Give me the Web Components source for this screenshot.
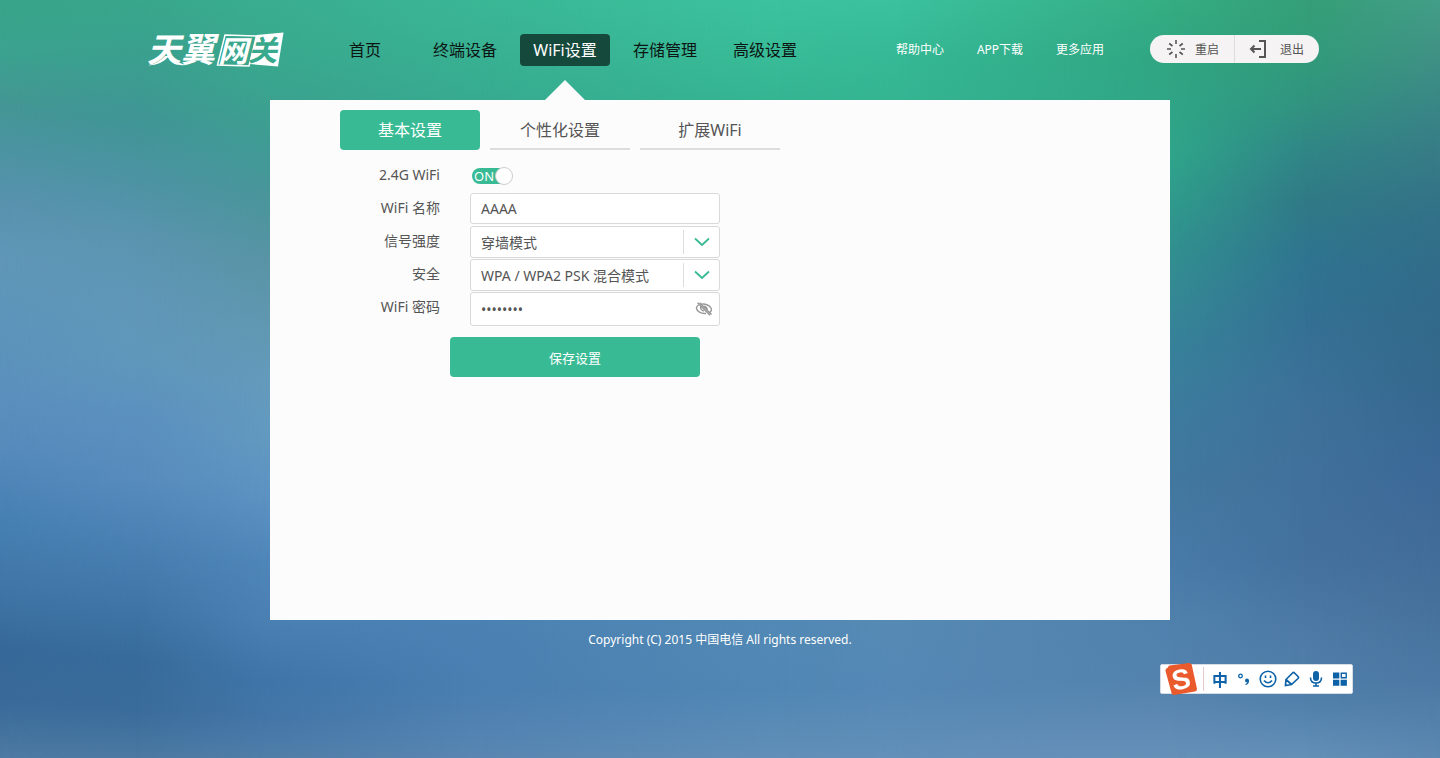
<!DOCTYPE html>
<html lang="zh-CN">
<head>
<meta charset="utf-8">
<meta name="viewport" content="width=device-width, initial-scale=1">
<title>天翼网关</title>
<style>
  body { margin: 0; font: 14px "Noto Sans", "Noto Sans CJK SC", sans-serif; color: #555; --accent: #38bb94; --surface: #fcfcfc; }
</style>
</head>
<body>
<gateway-page>
  <gateway-header slot="header"></gateway-header>
  <wifi-panel slot="main"></wifi-panel>
  <span slot="footer">Copyright (C) 2015 中国电信 All rights reserved.</span>
</gateway-page>
<ime-toolbar></ime-toolbar>

<script>
const define = (name, html, setup) => {
  const template = document.createElement('template');
  template.innerHTML = html;
  customElements.define(name, class extends HTMLElement {
    constructor() {
      super();
      this.attachShadow({ mode: 'open' }).append(template.content.cloneNode(true));
      if (setup) setup(this.shadowRoot, this);
    }
  });
};

/* Blurred backdrop: vertical gradients that fade into each other from left to right.
   Each entry is [x of 1440, [y of 758, colour], ...]. */
const columns = [
  [0, [0,'#38a488'],[50,'#3ba38f'],[100,'#439793'],[140,'#4a94a0'],[200,'#5892ae'],[260,'#6097b8'],[330,'#5c94bb'],[400,'#5b8fbd'],[450,'#568abc'],[520,'#4680b2'],[590,'#4076a7'],[650,'#366999'],[700,'#396a99'],[758,'#4d7aa3']],
  [135, [0,'#38a78b'],[60,'#3b9f8f'],[120,'#409595'],[180,'#4d93a4'],[240,'#5b94b0'],[300,'#6097b8'],[360,'#5f97bb'],[420,'#5b90bf'],[480,'#578bbd'],[540,'#4a81b3'],[600,'#4077a8'],[660,'#376b9b'],[710,'#3a6c9a'],[758,'#4b79a3']],
  [270, [0,'#3aad90'],[60,'#39a88e'],[100,'#3ba28f'],[150,'#409a95'],[200,'#4a959b'],[260,'#5894a5'],[320,'#6097b0'],[380,'#649abb'],[440,'#6299c0'],[500,'#5b92c2'],[560,'#4f86b8'],[620,'#4a80b3'],[680,'#3f75a8'],[720,'#4476a8'],[758,'#507ea9']],
  [480, [0,'#3ab795'],[100,'#37ab90'],[400,'#5f97ba'],[620,'#4b82b3'],[690,'#4a7fb1'],[758,'#5986b2']],
  [780, [0,'#3cc29e'],[60,'#38bb97'],[100,'#35b592'],[400,'#4c8cab'],[620,'#5289b5'],[690,'#5187b4'],[758,'#618fb8']],
  [900, [0,'#3bc19e'],[60,'#35b894'],[100,'#35b592'],[400,'#468cab'],[620,'#568ab4'],[690,'#5588b5'],[758,'#6290b9']],
  [1170, [0,'#35ad82'],[60,'#30a582'],[150,'#2fa58a'],[200,'#2f9b8c'],[250,'#31908f'],[300,'#358895'],[350,'#37819a'],[400,'#3c7c9d'],[480,'#42789f'],[560,'#487ba8'],[620,'#5081ad'],[680,'#5382ad'],[758,'#6690b8']],
  [1305, [0,'#359f77'],[60,'#319b7a'],[100,'#31947f'],[150,'#308686'],[200,'#307a86'],[260,'#2f7490'],[320,'#347093'],[400,'#3d7199'],[480,'#41709c'],[560,'#44719e'],[640,'#4e7ba7'],[700,'#5080ab'],[758,'#6390b7']],
  [1440, [0,'#429e87'],[50,'#409284'],[100,'#3a8786'],[150,'#377c86'],[220,'#327088'],[300,'#316a8a'],[380,'#34688c'],[450,'#3a6896'],[520,'#3f6a98'],[600,'#45709c'],[680,'#4b78a4'],[758,'#5b88b0']]
];

define('blurred-backdrop', `
<style>
  :host { display: block; position: absolute; inset: 0; z-index: -1; overflow: hidden; }
  div { position: absolute; inset: 0; }
</style>`, root => {
  columns.forEach(([x, ...stops], i) => {
    const layer = document.createElement('div');
    layer.style.background = `linear-gradient(${stops.map(([y, c]) => `${c} ${y / 758 * 100}%`).join(',')})`;
    if (i) {
      const mask = `linear-gradient(90deg, transparent ${columns[i - 1][0] / 1440 * 100}%, #000 ${x / 1440 * 100}%)`;
      layer.style.webkitMaskImage = layer.style.maskImage = mask;
    }
    root.append(layer);
  });
});

define('gateway-page', `
<style>
  :host { display: flex; flex-direction: column; position: relative; z-index: 0; min-height: 100vh; }
  main { width: 100%; max-width: 900px; margin: 0 auto; }
  footer { padding: 10px; text-align: center; font-size: 12px; line-height: 20px; color: #fff; }
</style>
<blurred-backdrop></blurred-backdrop>
<slot name="header"></slot>
<main><slot name="main"></slot></main>
<footer><slot name="footer"></slot></footer>`);

define('gateway-logo', `
<style>
  :host { display: block; }
  a, svg { display: block; }
  svg { overflow: visible; }
  text { font-family: "Noto Sans CJK SC", sans-serif; font-weight: 700; font-style: italic; }
</style>
<a href="#" aria-label="天翼网关">
<svg width="136" height="36" viewBox="0 0 136 36">
  <path d="M77 3 L108.500 4 L101 34 L69.500 33 Z" fill="none" stroke="#fff" stroke-width="1.500"/>
  <path d="M108.500 3 L135.500 .500 L130 34.500 L101.500 32 Z" fill="#fff"/>
  <path d="M0 33.500 Q11 31 17 24 L21 24 Q14 33 0 33.500 Z M19 24 L23 24 Q28 30 37 33 Q27 35 19 24 Z" fill="#fff"/>
  <text x="-1" y="30" font-size="34" fill="#fff">天翼</text>
  <text x="70" y="30" font-size="30" fill="#fff">网</text>
  <text x="100" y="29" font-size="29" fill="#39a98e">关</text>
</svg></a>`);

define('nav-item', `
<style>
  :host { display: block; flex: 0 0 100px; }
  a { display: block; position: relative; margin: 0 5px; font-size: 16px; line-height: 32px; text-align: center; white-space: nowrap; color: #0c1512; text-decoration: none; border-radius: 4px; }
  :host([current]) a { color: #fff; background: #15493c; }
  :host([current]) a::after { content: ""; position: absolute; top: 46px; left: calc(50% - 20px); border: 20px solid transparent; border-top: 0; border-bottom-color: var(--surface); }
</style>
<a href="#"><slot></slot></a>`);

define('gateway-header', `
<style>
  :host { display: block; }
  header { display: flex; align-items: center; box-sizing: border-box; height: 100px; max-width: 1200px; margin: 0 auto; padding: 0 1px 0 28px; }
  gateway-logo { flex: 0 0 136px; }
  nav { display: flex; }
  .main { margin-left: 31px; }
  .links { margin-left: auto; margin-right: 30px; }
  .links a { width: 80px; text-align: center; font-size: 12px; line-height: 20px; color: #fff; text-decoration: none; }
  .session { display: flex; height: 28px; margin-bottom: 2px; border-radius: 14px; overflow: hidden; background: #f5f3f3; }
  button { display: flex; align-items: center; justify-content: space-between; width: 84px; padding: 0 15px 0 17px; border: 0; background: none; font: inherit; font-size: 12px; color: #555; }
  button + button { width: 85px; padding-left: 14px; border-left: 1px solid #ddd; }
  svg { fill: none; stroke: #555; stroke-width: 2; }
</style>
<header>
  <gateway-logo></gateway-logo>
  <nav class="main">
    <nav-item>首页</nav-item>
    <nav-item>终端设备</nav-item>
    <nav-item current>WiFi设置</nav-item>
    <nav-item>存储管理</nav-item>
    <nav-item>高级设置</nav-item>
  </nav>
  <nav class="links"><a href="#">帮助中心</a><a href="#">APP下载</a><a href="#">更多应用</a></nav>
  <div class="session">
    <button type="button"><svg width="18" height="18" viewBox="0 0 18 18"><path d="M9 0V4M9 14V18M0 9H4M14 9H18M2.200 3.500L5.500 6M12.500 12L15.800 14.500M2.200 14.500L5.500 12M12.500 6L15.800 3.500" stroke-width="1.600"/></svg>重启</button>
    <button type="button"><svg width="18" height="18" viewBox="0 0 18 18"><path d="M10 1H16V17H10M12 9H2M5.500 5.500L2 9L5.500 12.500"/></svg>退出</button>
  </div>
</header>`);

define('panel-tab', `
<style>
  :host { display: block; flex: 0 0 140px; }
  a { display: block; box-sizing: border-box; height: 40px; border-bottom: 2px solid #ddd; font-size: 16px; line-height: 40px; text-align: center; color: #555; text-decoration: none; }
  :host([current]) a { border: 0; border-radius: 4px; background: var(--accent); color: #fff; }
</style>
<a href="#"><slot></slot></a>`);

const rowStyle = `
  :host { display: block; }
  .row { display: flex; gap: 30px; min-height: 33px; }
  .row > label { flex: 0 0 100px; text-align: right; line-height: 30px; }
  .box { position: relative; flex: 0 1 250px; }
  input, select { display: block; box-sizing: border-box; width: 100%; margin: 0; padding: 0 10px; border: 1px solid #d9d9d9; border-radius: 3px; background: #fff; color: #555; font: inherit; }
  svg { fill: none; }`;

define('switch-row', `
<style>${rowStyle}
  .switch { position: relative; width: 42px; height: 18px; margin: 7px 0 0 1px; }
  input { appearance: none; width: 36px; height: 16px; margin-top: 1px; margin-left: 1px; padding: 0; border: 0; border-radius: 8px; background: var(--accent); }
  .on { position: absolute; left: 3px; top: 0; font-size: 13px; line-height: 18px; color: #fff; pointer-events: none; }
  .knob { position: absolute; right: 0; top: 0; box-sizing: border-box; width: 18px; height: 18px; border: 1px solid #ccc; border-radius: 50%; background: #fff; pointer-events: none; }
</style>
<div class="row"><label for="c"></label><div class="switch"><input id="c" type="checkbox" role="switch" checked><span class="on">ON</span><span class="knob"></span></div></div>`,
(root, host) => { root.querySelector('label').textContent = host.getAttribute('label'); });

define('text-row', `
<style>${rowStyle} input { height: 31px; }</style>
<div class="row"><label for="c"></label><div class="box"><input id="c" type="text"></div></div>`,
(root, host) => {
  root.querySelector('label').textContent = host.getAttribute('label');
  root.querySelector('input').value = host.getAttribute('value');
});

define('select-row', `
<style>${rowStyle}
  select { appearance: none; height: 32px; padding-right: 40px; }
  .arrow { position: absolute; right: 0; top: 4px; display: grid; place-items: center; width: 36px; height: 24px; border-left: 1px solid #ddd; pointer-events: none; }
</style>
<div class="row"><label for="c"></label><div class="box"><select id="c"><option></option></select>
<span class="arrow"><svg width="16" height="10" viewBox="0 0 16 10"><path d="M1 1.500L8 8L15 1.500" stroke="#38bb94" stroke-width="1.800"/></svg></span></div></div>`,
(root, host) => {
  root.querySelector('label').textContent = host.getAttribute('label');
  root.querySelector('option').textContent = host.getAttribute('value');
});

define('password-row', `
<style>${rowStyle}
  input { height: 34px; padding-right: 32px; }
  button { position: absolute; right: 7px; top: 10px; display: block; padding: 0; border: 0; background: none; }
  svg { display: block; }
</style>
<div class="row"><label for="c"></label><div class="box"><input id="c" type="password">
<button type="button" aria-label="显示密码"><svg width="18" height="14" viewBox="0 0 18 14" stroke="#999" stroke-width="1.400"><path d="M3.500 3C2 4 1.200 5.200 1.500 6.500C2.200 9.500 6 11.500 9.500 11.500H11M6 2.300C10 1.500 14.500 3 16 6C16.900 8 16 9.700 14.300 10.800M5.800 4.800C5 6.500 6.500 8.800 9 9M9 4.200C11 4.400 12.400 6 12.200 7.500M2.500 .800L15 13.200M4.600 .800L16.500 12.600"/></svg></button></div></div>`,
(root, host) => {
  root.querySelector('label').textContent = host.getAttribute('label');
  root.querySelector('input').value = '12345678';
});

define('wifi-panel', `
<style>
  :host { display: block; box-sizing: border-box; min-height: 520px; padding: 10px 70px; background: var(--surface); }
  nav { display: flex; gap: 10px; margin-bottom: 10px; }
  .save { display: block; width: 250px; height: 40px; margin: 11px 0 0 110px; border: 0; border-radius: 4px; background: var(--accent); color: #fff; font: inherit; font-size: 13px; }
</style>
<nav><panel-tab current>基本设置</panel-tab><panel-tab>个性化设置</panel-tab><panel-tab>扩展WiFi</panel-tab></nav>
<form>
  <switch-row label="2.4G WiFi"></switch-row>
  <text-row label="WiFi 名称" value="AAAA"></text-row>
  <select-row label="信号强度" value="穿墙模式"></select-row>
  <select-row label="安全" value="WPA / WPA2 PSK 混合模式"></select-row>
  <password-row label="WiFi 密码"></password-row>
  <button class="save" type="button">保存设置</button>
</form>`);

define('ime-toolbar', `
<style>
  :host { display: flex; align-items: center; position: fixed; right: 87px; bottom: 64px; z-index: 2; box-sizing: border-box; width: 193px; height: 30px; padding: 0 0 0 4px; border: 1px solid #d5dce5; border-radius: 2px; background: #fff; color: #0d62a8; }
  svg { display: block; fill: none; }
  .brand { flex: none; margin-right: 6px; overflow: visible; }
  .brand text { font: bold 28px "Liberation Sans", sans-serif; }
  .tools { display: flex; flex: 1; padding-left: 4px; border-left: 1px solid #e3c9c9; }
  button { display: grid; place-items: center; flex: 0 0 24px; height: 24px; padding: 0; border: 0; background: none; color: inherit; font: bold 16px "Noto Sans CJK SC", sans-serif; line-height: 24px; }
</style>
<svg class="brand" width="32" height="32" viewBox="0 0 32 32"><path d="M3 4.500Q3 3 4.500 2.500L24 0Q26 0 26.700 1.500L32 26Q32 28 30 28.500L9 32Q7 32 6.500 30L.500 8Q0 6 3 4.500Z" fill="#ea5a2c"/><text x="16" y="26" text-anchor="middle" fill="#fff" transform="rotate(-10 16 16)">S</text></svg>
<div class="tools">
  <button type="button">中</button>
  <button type="button" aria-label="标点"><svg width="14" height="14" viewBox="0 0 14 14"><circle cx="3.500" cy="4" r="1.800" stroke="currentColor" stroke-width="1.300"/><circle cx="10" cy="8.500" r="2" fill="currentColor"/><path d="M11.500 8.500Q11.500 11.500 8.500 12.500" stroke="currentColor" stroke-width="1.300"/></svg></button>
  <button type="button" aria-label="表情"><svg width="18" height="18" viewBox="0 0 18 18" stroke="currentColor" stroke-width="1.600"><circle cx="9" cy="9" r="7.800"/><path d="M6.500 5.500V8M11.500 5.500V8M5 10.500Q9 15 13 10.500"/></svg></button>
  <button type="button" aria-label="手写"><svg width="16" height="16" viewBox="0 0 16 16" stroke="currentColor" stroke-width="1.700"><path d="M2 8.500L8.500 2Q9.500 1 10.500 2L14 5.500Q15 6.500 14 7.500L7.500 13.500L1.500 14.500ZM2 8.500L7.500 13.500"/></svg></button>
  <button type="button" aria-label="语音"><svg width="14" height="16" viewBox="0 0 14 16"><rect x="4" y="0" width="6" height="10" rx="3" fill="currentColor"/><path d="M1.500 6.500Q1.500 12 7 12T12.500 6.500M7 12V15M4 15H10" stroke="currentColor" stroke-width="1.600"/></svg></button>
  <button type="button" aria-label="工具箱"><svg width="14" height="14" viewBox="0 0 14 14"><path d="M0 .500H6.300V6.500H0ZM0 7.700H6.300V13.700H0ZM7.600 7.700H13.900V13.700H7.600Z" fill="currentColor"/><path d="M8.300 1.200H13.200V5.800H8.300Z" stroke="currentColor" stroke-width="1.400" fill="none"/></svg></button>
</div>`);
</script>
</body>
</html>
